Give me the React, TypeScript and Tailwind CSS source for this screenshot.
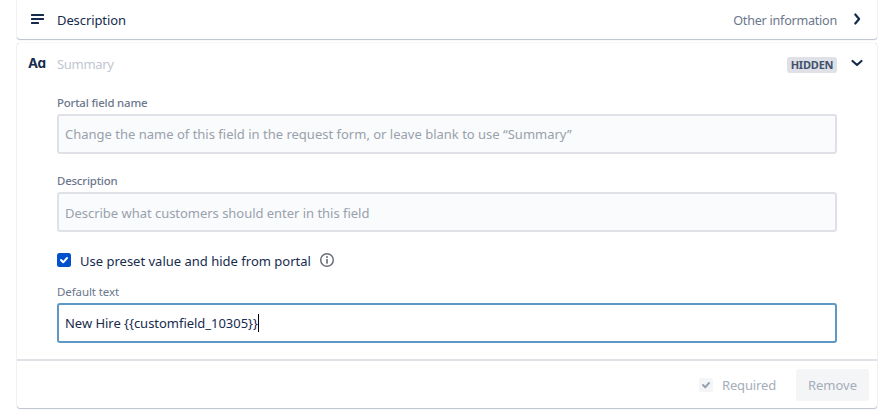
import type { ReactNode } from "react";

function FieldLabel({ children, className = "" }: { children: ReactNode; className?: string }) {
  return <div className={`h-4 leading-4 whitespace-nowrap text-[#6b778c] ${className}`}>{children}</div>;
}

function TextBox({ children, active = false }: { children: ReactNode; active?: boolean }) {
  return (
    <div
      className={`flex h-10 items-center rounded-[3px] border-2 px-1.5 whitespace-nowrap ${
        active ? "border-[#5e98c4] bg-white text-[#172b4d]" : "border-[#dfe1e6] bg-[#fafbfc] text-[#98a1ac]"
      }`}
    >
      {children}
    </div>
  );
}

export default function App() {
  return (
    <div className="h-[418px] w-[893px] overflow-hidden bg-white pl-[17px] font-['Noto_Sans','Open_Sans',sans-serif] text-[13px] leading-5">
      <section className="flex h-[39px] w-[860px] items-center rounded-b-[3px] bg-white pr-[12px] pl-[13px] shadow-[0_1px_1px_rgba(9,30,66,0.25),0_0_1px_rgba(9,30,66,0.31)]">
        <svg className="h-4 w-4 shrink-0" viewBox="0 0 16 16" fill="#172b4d">
          <rect x="1" y="2" width="13" height="2" rx=".5" />
          <rect x="1" y="6" width="13" height="2" rx=".5" />
          <rect x="1" y="10" width="8" height="2" rx=".5" />
        </svg>
        <span className="mt-px ml-[11px] tracking-[-0.1px] text-[#172b4d]">Description</span>
        <span className="mt-0.5 ml-auto text-[12.6px] tracking-[-0.25px] text-[#6b778c]">Other information</span>
        <svg className="mb-px ml-3 h-4 w-4 shrink-0" viewBox="0 0 16 16" fill="none" stroke="#172b4d" strokeWidth="2.2" strokeLinecap="round" strokeLinejoin="round">
          <path d="m6.3 3.5 3.8 4.5-3.8 4.5" />
        </svg>
      </section>

      <section className="mt-1 flex h-[365px] w-[860px] flex-col rounded-[3px] bg-white shadow-[0_1px_1px_rgba(9,30,66,0.25),0_0_1px_rgba(9,30,66,0.31)]">
        <header className="flex h-[42px] items-center pr-[12px] pl-[11px]">
          <span className="mb-0.5 w-[18px] font-['Inter'] text-[13.5px] font-bold tracking-[-0.5px] text-[#172b4d]">Aɑ</span>
          <span className="ml-[11px] tracking-[-0.3px] text-[#c1c7d0]">Summary</span>
          <span className="mt-0.5 ml-auto flex h-4 w-[50px] items-center justify-center rounded-[3px] bg-[#dfe1e6] text-[11px] font-bold tracking-[-0.2px] text-[#42526e]">
            HIDDEN
          </span>
          <svg className="mb-0.5 ml-3 h-4 w-4 shrink-0" viewBox="0 0 16 16" fill="none" stroke="#172b4d" strokeWidth="2.2" strokeLinecap="round" strokeLinejoin="round">
            <path d="m3.5 6 4.5 4 4.5-4" />
          </svg>
        </header>

        <div className="flex h-[274px] flex-col pt-[10px] pr-10 pl-10">
          <FieldLabel className="text-[11.4px] font-medium tracking-[-0.18px]">Portal field name</FieldLabel>
          <div className="mt-[3px]">
            <TextBox>Change the name of this field in the request form, or leave blank to use “Summary”</TextBox>
          </div>
          <FieldLabel className="mt-[19px] text-[11.4px] font-medium tracking-[-0.18px]">Description</FieldLabel>
          <div className="mt-[3px]">
            <TextBox>
              <span className="mt-px tracking-[-0.03px]">Describe what customers should enter in this field</span>
            </TextBox>
          </div>
          <div className="mt-[18px] flex h-5 items-center">
            <svg className="h-[14px] w-[14px] shrink-0" viewBox="0 0 14 14">
              <rect width="14" height="14" rx="2.5" fill="#0052cc" />
              <path d="m4 7 2.2 2.3L10 5" fill="none" stroke="white" strokeWidth="2" strokeLinecap="round" strokeLinejoin="round" />
            </svg>
            <span className="mt-0.5 ml-[9px] whitespace-nowrap text-[#172b4d]">Use preset value and hide from portal</span>
            <svg className="ml-2 h-4 w-4 shrink-0" viewBox="0 0 16 16" fill="none" stroke="#6b6f78">
              <circle cx="8" cy="8" r="6.3" strokeWidth="1.5" />
              <path d="M8 7.5v3.5" strokeWidth="1.7" strokeLinecap="round" />
              <circle cx="8" cy="4.9" r="1" fill="#6b6f78" stroke="none" />
            </svg>
          </div>
          <FieldLabel className="mt-[14px] text-[11.5px] tracking-[-0.1px]">Default text</FieldLabel>
          <div className="mt-[3px]">
            <TextBox active>
              <span className="tracking-[-0.03px]">New Hire {"{{customfield_10305}}"}</span>
              <span className="h-[18px] w-px bg-black" />
            </TextBox>
          </div>
        </div>

        <footer className="flex h-[49px] items-center justify-end border-t-2 border-[#dfe1e6] pr-2">
          <svg className="h-[14px] w-[14px]" viewBox="0 0 14 14">
            <rect width="14" height="14" rx="2.5" fill="#f4f5f7" />
            <path d="m4 7 2.2 2.3L10 5" fill="none" stroke="#98a1b0" strokeWidth="2" strokeLinecap="round" strokeLinejoin="round" />
          </svg>
          <span className="mt-px ml-[9px] tracking-[-0.15px] text-[#a5adba]">Required</span>
          <span className="ml-5 flex h-8 w-[73px] items-center justify-center rounded-[3px] bg-[#f4f5f7] text-[#a5adba]">Remove</span>
        </footer>
      </section>
    </div>
  );
}
